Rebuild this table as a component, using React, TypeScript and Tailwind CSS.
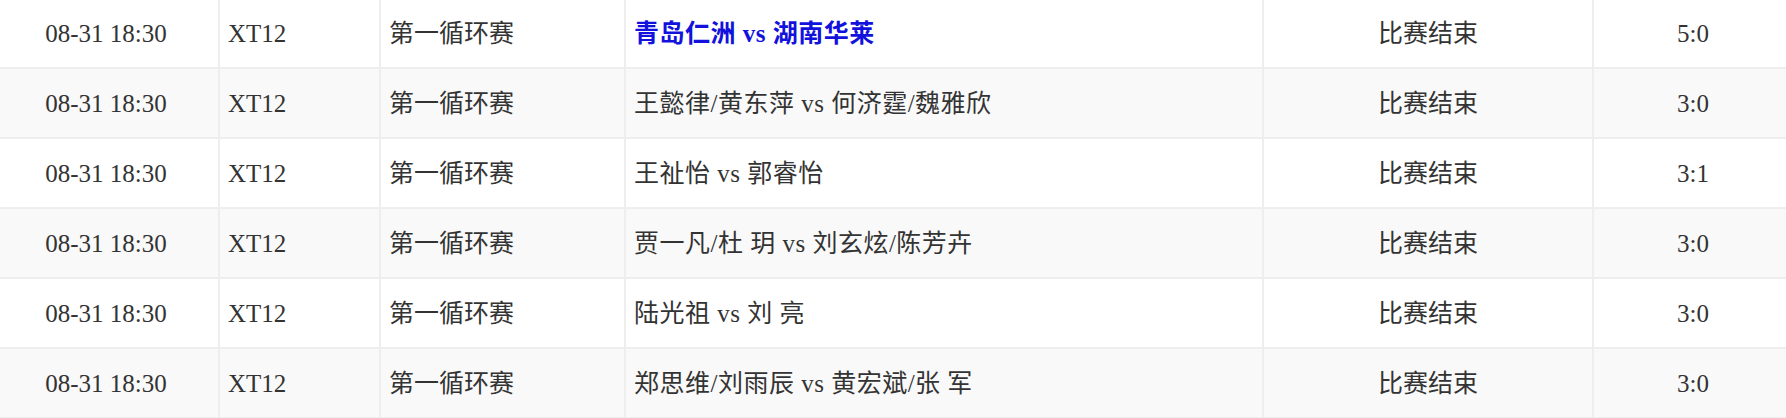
const matches = [
  { time: '08-31 18:30', group: 'XT12', round: '第一循环赛', teams: '青岛仁洲 vs 湖南华莱', status: '比赛结束', score: '5:0', link: true },
  { time: '08-31 18:30', group: 'XT12', round: '第一循环赛', teams: '王懿律/黄东萍 vs 何济霆/魏雅欣', status: '比赛结束', score: '3:0' },
  { time: '08-31 18:30', group: 'XT12', round: '第一循环赛', teams: '王祉怡 vs 郭睿怡', status: '比赛结束', score: '3:1' },
  { time: '08-31 18:30', group: 'XT12', round: '第一循环赛', teams: '贾一凡/杜 玥 vs 刘玄炫/陈芳卉', status: '比赛结束', score: '3:0' },
  { time: '08-31 18:30', group: 'XT12', round: '第一循环赛', teams: '陆光祖 vs 刘 亮', status: '比赛结束', score: '3:0' },
  { time: '08-31 18:30', group: 'XT12', round: '第一循环赛', teams: '郑思维/刘雨辰 vs 黄宏斌/张 军', status: '比赛结束', score: '3:0' },
];

export default function App() {
  return (
    <div className="h-[418px] w-full overflow-hidden bg-white">
      <table
        className="-ml-2 -mt-[3px] w-[1802px] table-fixed border-collapse text-[25px] leading-none text-[#333]"
        style={{ fontFamily: '"Liberation Serif", "Noto Sans CJK SC", serif' }}
      >
        <colgroup>
          <col className="w-[226px]" />
          <col className="w-[161px]" />
          <col className="w-[245px]" />
          <col className="w-[638px]" />
          <col className="w-[330px]" />
          <col />
        </colgroup>
        <tbody>
          {matches.map((m, i) => (
            <tr key={i} className={i % 2 === 1 ? 'bg-[#f9f9f9]' : 'bg-white'}>
              <td className="h-[70px] border-2 border-[#eeeeee] px-2 text-center">{m.time}</td>
              <td className="h-[70px] border-2 border-[#eeeeee] px-2">{m.group}</td>
              <td className="h-[70px] border-2 border-[#eeeeee] px-2">{m.round}</td>
              <td className="h-[70px] border-2 border-[#eeeeee] px-2 tracking-[0.5px]">
                {m.link ? (
                  <a className="font-bold text-[#1212dc]">{m.teams}</a>
                ) : (
                  m.teams
                )}
              </td>
              <td className="h-[70px] border-2 border-[#eeeeee] px-2 text-center">{m.status}</td>
              <td className="h-[70px] border-2 border-[#eeeeee] px-2 text-center">{m.score}</td>
            </tr>
          ))}
        </tbody>
      </table>
    </div>
  );
}
